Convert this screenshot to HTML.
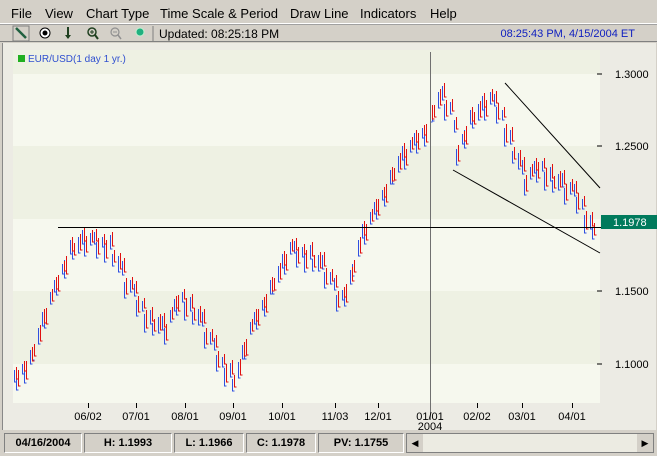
<!DOCTYPE html>
<html><head><meta charset="utf-8"><style>
*{margin:0;padding:0;box-sizing:border-box}
body{width:657px;height:456px;background:#d4d0c8;font-family:"Liberation Sans",sans-serif;position:relative;overflow:hidden}
.menu{position:absolute;top:0;left:0;width:657px;height:24px;border-bottom:1px solid #fff;font-size:13px}
.menu span{position:absolute;top:6px}
.tb{position:absolute;top:24px;left:0;width:657px;height:18px;border-top:1px solid #a0a0a0;border-bottom:1px solid #808080;font-size:12px}
.st{position:absolute;top:433px;height:20px;font-size:11px;font-weight:bold;text-align:center;line-height:19px;border:1px solid;border-color:#808080 #fff #fff #808080}
</style></head><body>
<div class="menu"><span style="left:11px">File</span><span style="left:45px">View</span><span style="left:86px">Chart Type</span><span style="left:160px">Time Scale &amp; Period</span><span style="left:290px">Draw Line</span><span style="left:360px">Indicators</span><span style="left:430px">Help</span></div>
<div class="tb">
<svg width="160" height="18" style="position:absolute;left:10px;top:0">
<rect x="3" y="1" width="16" height="15" fill="none" stroke="#808080"/>
<line x1="6" y1="3" x2="16" y2="13" stroke="#206040" stroke-width="2.5"/>
<circle cx="35" cy="8" r="5" fill="#fff" stroke="#000"/><circle cx="35" cy="8" r="2.5" fill="#000"/>
<line x1="58" y1="2" x2="58" y2="13" stroke="#204020" stroke-width="2"/><path d="M55 10 L58 14 L61 10Z" fill="#204020"/>
<circle cx="82" cy="7" r="4" fill="none" stroke="#204020" stroke-width="1.5"/><line x1="85" y1="10" x2="88" y2="14" stroke="#204020" stroke-width="2"/><path d="M80 7h4M82 5v4" stroke="#204020"/>
<circle cx="105" cy="7" r="4" fill="none" stroke="#909090" stroke-width="1.2"/><line x1="108" y1="10" x2="111" y2="14" stroke="#909090" stroke-width="1.5"/><path d="M103 7h4" stroke="#909090"/>
<circle cx="130" cy="7" r="4" fill="#20b080" stroke="#c0f0d0"/>
<line x1="143" y1="1" x2="143" y2="16" stroke="#808080"/>
</svg>
<span style="position:absolute;left:159px;top:2px">Updated: 08:25:18 PM</span>
<span style="position:absolute;right:22px;top:3px;font-size:11px;color:#1020c0">08:25:43 PM, 4/15/2004 ET</span>
</div>
<div style="position:absolute;left:2px;top:43px;width:654px;height:387px;background:#ecebe4;border-left:1px solid #888"></div>
<svg width="657" height="456" style="position:absolute;left:0;top:0" font-family="Liberation Sans, sans-serif">
<defs>
<path id="rb" d="M18 378m0-8v16h2M26 370m0-9v18h2M34 350m0-6v12h2M46 316m0-8v16h2M58 283m0-8v16h2M66 265m0-9v18h2M74 249m0-6v12h2M86 244m0-8v16h2M98 246m0-8v16h2M106 249m0-9v18h2M114 256m0-6v12h2M126 286m0-8v16h2M138 304m0-8v16h2M146 319m0-9v18h2M154 325m0-6v12h2M166 332m0-8v16h2M178 303m0-8v16h2M186 307m0-9v18h2M194 314m0-6v12h2M206 336m0-8v16h2M218 359m0-8v16h2M226 373m0-9v18h2M234 381m0-6v12h2M246 347m0-8v16h2M258 317m0-8v16h2M266 303m0-9v18h2M274 284m0-6v12h2M286 262m0-8v16h2M298 255m0-8v16h2M306 259m0-9v18h2M314 261m0-6v12h2M326 276m0-8v16h2M338 299m0-8v16h2M346 293m0-9v18h2M354 266m0-6v12h2M366 232m0-8v16h2M378 207m0-8v16h2M386 193m0-9v18h2M394 174m0-6v12h2M406 157m0-8v16h2M418 141m0-8v16h2M426 133m0-9v18h2M434 111m0-6v12h2M446 108m0-8v16h2M458 153m0-8v16h2M466 135m0-9v18h2M474 118m0-6v12h2M486 108m0-8v16h2M498 111m0-8v16h2M506 133m0-9v18h2M514 153m0-6v12h2M526 183m0-8v16h2M538 170m0-8v16h2M546 177m0-9v18h2M554 182m0-6v12h2M566 192m0-8v16h2M578 201m0-8v16h2M586 220m0-9v18h2M594 229m0-6v12h2"/>
<path id="bb" d="M14 376m0-6v12h2M22 369m0-5v10h2M30 357m0-7v14h2M38 336m0-8v16h2M42 319m0-7v14h2M50 298m0-6v12h2M54 286m0-6v12h2M62 269m0-5v10h2M70 247m0-7v14h2M78 245m0-8v16h2M82 237m0-7v14h2M90 239m0-6v12h2M94 238m0-6v12h2M102 242m0-5v10h2M110 242m0-7v14h2M118 264m0-8v16h2M122 268m0-7v14h2M130 286m0-6v12h2M134 290m0-6v12h2M142 306m0-5v10h2M150 317m0-7v14h2M158 325m0-8v16h2M162 323m0-7v14h2M170 316m0-6v12h2M174 305m0-6v12h2M182 297m0-5v10h2M190 304m0-7v14h2M198 317m0-8v16h2M202 319m0-7v14h2M210 338m0-6v12h2M214 344m0-6v12h2M222 362m0-5v10h2M230 370m0-7v14h2M238 370m0-8v16h2M242 352m0-7v14h2M250 328m0-6v12h2M254 318m0-6v12h2M262 305m0-5v10h2M270 287m0-7v14h2M278 274m0-8v16h2M282 261m0-7v14h2M290 248m0-6v12h2M294 247m0-6v12h2M302 252m0-5v10h2M310 252m0-7v14h2M318 263m0-8v16h2M322 262m0-7v14h2M330 278m0-6v12h2M334 284m0-6v12h2M342 295m0-5v10h2M350 277m0-7v14h2M358 248m0-8v16h2M362 231m0-7v14h2M370 218m0-6v12h2M374 208m0-6v12h2M382 195m0-5v10h2M390 177m0-7v14h2M398 164m0-8v16h2M402 153m0-7v14h2M410 146m0-6v12h2M414 139m0-6v12h2M422 133m0-5v10h2M430 115m0-7v14h2M438 100m0-8v16h2M442 93m0-7v14h2M450 108m0-6v12h2M454 126m0-6v12h2M462 139m0-5v10h2M470 117m0-7v14h2M478 112m0-8v16h2M482 103m0-7v14h2M490 98m0-6v12h2M494 100m0-6v12h2M502 115m0-5v10h2M510 137m0-7v14h2M518 161m0-8v16h2M522 167m0-7v14h2M530 173m0-6v12h2M534 167m0-6v12h2M542 166m0-5v10h2M550 174m0-7v14h2M558 182m0-8v16h2M562 180m0-7v14h2M570 188m0-6v12h2M574 190m0-6v12h2M582 204m0-5v10h2M590 222m0-7v14h2"/>
</defs>
<rect x="13" y="50" width="587" height="24" fill="#eef1e3"/>
<rect x="13" y="74" width="587" height="72" fill="#f6f8ee"/>
<rect x="13" y="146" width="587" height="73" fill="#eef1e3"/>
<rect x="13" y="219" width="587" height="72" fill="#f6f8ee"/>
<rect x="13" y="291" width="587" height="73" fill="#eef1e3"/>
<rect x="13" y="364" width="587" height="39" fill="#f6f8ee"/>
<rect x="18" y="55" width="7" height="7" fill="#20b020"/>
<text x="28" y="62" font-size="10" fill="#3050d0">EUR/USD(1 day  1 yr.)</text>
<g font-size="11" fill="#000">
<text x="615" y="78">1.3000</text><text x="615" y="150">1.2500</text><text x="615" y="295">1.1500</text><text x="615" y="368">1.1000</text>
<path d="M597 74h5M597 146h5M597 291h5M597 364h5" stroke="#000"/>
</g>
<rect x="601" y="215" width="56" height="14" fill="#007a5c"/>
<text x="613" y="226" font-size="11" fill="#fff">1.1978</text>
<g fill="none" stroke-width="1">
<use href="#rb" transform="translate(0.5,0)" stroke="#e01010"/>
<use href="#bb" transform="translate(0.5,0)" stroke="#3050e0"/>
<use href="#rb" transform="translate(-1.5,4)" stroke="#3050e0"/>
<use href="#bb" transform="translate(2.5,-3)" stroke="#e01010"/>
</g>
<line x1="430.5" y1="52" x2="430.5" y2="420" stroke="#707070"/>
<line x1="58" y1="227.5" x2="601" y2="227.5" stroke="#000"/>
<line x1="505" y1="83" x2="600" y2="188" stroke="#000"/>
<line x1="453" y1="170" x2="600" y2="253" stroke="#000"/>
<path stroke="#000" d="M88.5 403v5M136.5 403v5M185.5 403v5M233.5 403v5M282.5 403v5M335.5 403v5M378.5 403v5M477.5 403v5M522.5 403v5M572.5 403v5"/>
<g font-size="11" fill="#000" text-anchor="middle">
<text x="88" y="420">06/02</text><text x="136" y="420">07/01</text><text x="185" y="420">08/01</text><text x="233" y="420">09/01</text><text x="282" y="420">10/01</text><text x="335" y="420">11/03</text><text x="378" y="420">12/01</text><text x="430" y="420">01/01</text><text x="430" y="430">2004</text><text x="477" y="420">02/02</text><text x="522" y="420">03/01</text><text x="572" y="420">04/01</text>
</g>
</svg>
<div class="st" style="left:4px;width:78px">04/16/2004</div>
<div class="st" style="left:84px;width:88px">H: 1.1993</div>
<div class="st" style="left:174px;width:70px">L: 1.1966</div>
<div class="st" style="left:246px;width:70px">C: 1.1978</div>
<div class="st" style="left:318px;width:86px">PV: 1.1755</div>
<div style="position:absolute;left:406px;top:433px;width:248px;height:20px;background:#ecebe2;border:1px solid #808080">
<div style="position:absolute;left:0;top:0;width:16px;height:18px;background:#d4d0c8;font-size:9px;text-align:center;line-height:18px">◀</div>
<div style="position:absolute;right:0;top:0;width:16px;height:18px;background:#d4d0c8;font-size:9px;text-align:center;line-height:18px">▶</div></div>
</body></html>
